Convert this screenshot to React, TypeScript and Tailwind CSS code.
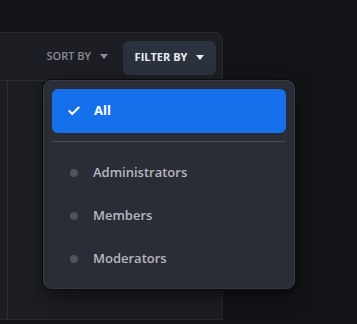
import { Check } from "lucide-react";

const options = ["Administrators", "Members", "Moderators"];

function Caret({ className }: { className: string }) {
  return (
    <svg width="8" height="5" viewBox="0 0 8 5" className={className}>
      <path d="M0 0h8L4 5z" fill="currentColor" />
    </svg>
  );
}

export default function App() {
  return (
    <div
      className="relative w-[357px] h-[324px] overflow-hidden bg-[#131418]"
      style={{ fontFamily: '"Open Sans", "Noto Sans", sans-serif' }}
    >
      {/* Table panel */}
      <div className="mt-[32px] -ml-2 w-[231px] h-[288px] flex flex-col rounded-tr-lg bg-[#1c1e24] border border-[#262930]">
        <div className="h-[48px] shrink-0 flex items-center justify-end gap-[15px] pr-[6px] border-b border-[#2b2e35]">
          <button className="flex items-center gap-[9px] text-[11px] font-semibold text-[#878c95]">
            SORT BY
            <Caret className="text-[#878c95]" />
          </button>
          <button className="h-[34px] w-[93px] mt-[2px] flex items-center justify-center gap-[9px] rounded-md bg-[#2c323d] text-[11px] font-bold text-[#e9ecf1]">
            FILTER BY
            <Caret className="text-[#e9ecf1]" />
          </button>
        </div>
        <div className="flex-1 flex">
          <div className="w-[15px] border-r border-[#2b2e35]" />
        </div>
      </div>

      {/* Dropdown */}
      <div className="absolute left-[43px] top-[80px] w-[252px] p-2 rounded-lg bg-[#2a2d35] border border-[#363a42] shadow-[0_0_0_1px_#0b0c0f,0_8px_20px_rgba(0,0,0,0.5)]">
        <div className="h-[44px] flex items-center gap-[13px] pl-[15px] rounded-md bg-[#1670ec] text-white">
          <Check size={14} strokeWidth={3.5} />
          <span className="text-[13px] font-bold">All</span>
        </div>
        <div className="mt-2 mb-[9px] h-px bg-[#464a53]" />
        {options.map((o) => (
          <div key={o} className="h-[43px] flex items-center gap-[15px] pl-[18px] text-[#b4b8c0]">
            <span className="w-2 h-2 rounded-full bg-[#4f535c]" />
            <span className="text-[13px] font-semibold">{o}</span>
          </div>
        ))}
      </div>
    </div>
  );
}
